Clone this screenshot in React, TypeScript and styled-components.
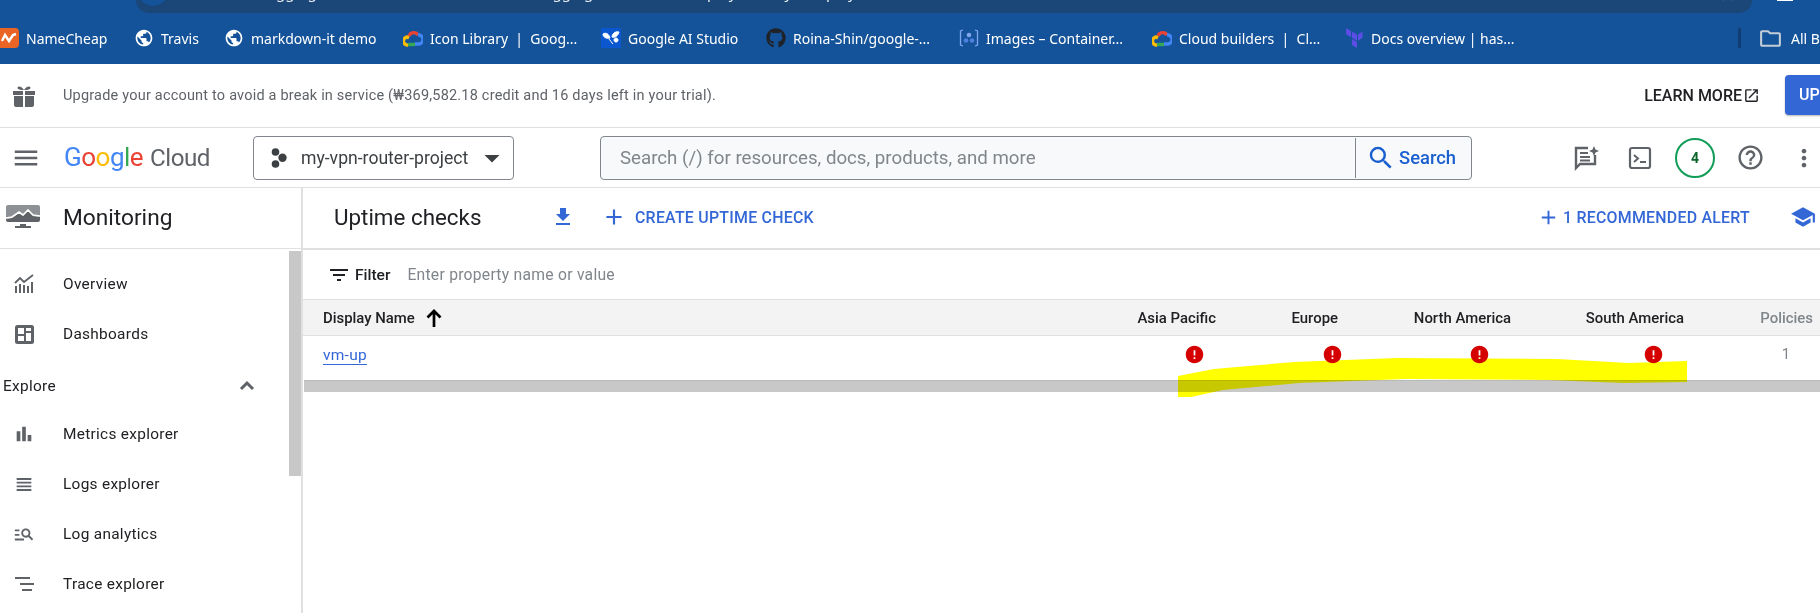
import React from "react";
import styled, { createGlobalStyle } from "styled-components";
import {
  MdMenu, MdArrowDropDown, MdSearch, MdFileDownload, MdAdd, MdFilterList, MdError,
  MdHelpOutline, MdMoreVert, MdOpenInNew, MdSchool, MdBarChart, MdViewHeadline,
  MdManageSearch, MdStarBorder, MdPublic, MdOutlineFolder,
} from "react-icons/md";
import { FaGithub } from "react-icons/fa";

const Global = createGlobalStyle`
  html, body { margin: 0; padding: 0; width: 1820px; height: 613px; overflow: hidden; background: #fff; }
  body { font-family: Roboto, "Liberation Sans", sans-serif; }
  * { box-sizing: border-box; }
`;

const Page = styled.div`
  position: relative;
  width: 1820px;
  height: 613px;
  overflow: hidden;
  display: flex;
  flex-direction: column;
`;

/* browser chrome */
const Chrome = styled.div`
  height: 64px;
  flex: none;
  background: #14539a;
  display: flex;
  flex-direction: column;
  overflow: hidden;
`;
const TopStrip = styled.div`
  height: 13px;
  flex: none;
  display: flex;
  padding-left: 136px;
`;
const AddressPill = styled.div`
  width: 1616px;
  height: 13px;
  background: #1b4678;
  border-radius: 0 0 14px 14px;
  overflow: hidden;
  display: flex;
  font: 15px "Noto Sans", sans-serif;
  color: #fff;
`;
const PillDot = styled.span`
  width: 30px;
  height: 30px;
  margin: -24px 0 0 2px;
  background: #14539a;
  border-radius: 50%;
  flex: none;
`;
const PillText = styled.span`
  margin: -18px 0 0 70px;
  line-height: 20px;
  white-space: pre;
  word-spacing: 9px;
  color: #e8edf3;
`;
const PillStar = styled.span`
  margin: -17px 14px 0 auto;
  color: #cfd8e3;
  font-size: 20px;
  display: flex;
`;
const ProfileTick = styled.span`
  width: 16px;
  height: 1px;
  margin-left: 25px;
  background: #fff;
`;
const Bookmarks = styled.div`
  flex: 1;
  display: flex;
  align-items: center;
  margin-top: -1px;
  color: #fff;
  font: 14px "Noto Sans", "Open Sans", sans-serif;
  white-space: nowrap;
`;
const Bookmark = styled.div<{ $x: number }>`
  width: ${(p) => p.$x}px;
  flex: none;
  display: flex;
  align-items: center;
  gap: 7px;
  white-space: pre;
  svg { flex: none; display: block; }
`;
const BookmarkDivider = styled.span`
  width: 3px;
  height: 20px;
  flex: none;
  border-radius: 1px;
  background: #0f3d73;
  margin-right: 19px;
`;
const FolderGlyph = styled.span`
  color: #c4ccd6;
  font-size: 25px;
  display: flex;
  margin-right: 8px;
  margin-left: -2px;
`;

/* trial banner */
const Banner = styled.div`
  height: 64px;
  flex: none;
  display: flex;
  align-items: center;
  border-bottom: 1px solid #e0e0e0;
  padding-left: 12px;
  overflow: hidden;
`;
const BannerText = styled.div`
  margin-left: 27px;
  font-size: 14.5px;
  color: #5f6368;
  letter-spacing: 0.2px;
  white-space: nowrap;
`;
const LearnMore = styled.div`
  margin-left: auto;
  display: flex;
  align-items: center;
  color: #202124;
  font-size: 16px;
  font-weight: 500;
  svg { margin-left: 1px; font-size: 17px; }
  margin-bottom: 1px;
`;
const UpgradeButton = styled.div`
  width: 60px;
  height: 40px;
  margin: -2px -25px 0 25px;
  background: #3367d6;
  border-radius: 4px;
  color: #fff;
  font-size: 16px;
  font-weight: 500;
  padding: 10px 0 0 14px;
  box-shadow: 0 1px 2px rgba(0,0,0,.3);
  flex: none;
  white-space: nowrap;
  overflow: hidden;
`;

/* cloud header */
const Header = styled.div`
  height: 60px;
  flex: none;
  display: flex;
  align-items: center;
  border-bottom: 1px solid #e0e0e0;
`;
const Hamburger = styled.div`
  width: 65px;
  flex: none;
  padding-left: 11px;
  color: #5f6368;
  font-size: 30px;
  display: flex;
`;
const Logo = styled.div`
  width: 188px;
  flex: none;
  display: flex;
  align-items: baseline;
  font-size: 26px;
  letter-spacing: -0.5px;
  margin-top: -2px;
  white-space: pre;
  margin-left: -1px;
`;
const LogoLetter = styled.span<{ $c: string }>`
  color: ${(p) => p.$c};
`;
const LogoWord = styled.span`
  color: #5f6368;
  font-size: 24.2px;
  margin-left: 7px;
`;
const ProjectPicker = styled.div`
  width: 261px;
  height: 44px;
  flex: none;
  margin-left: 1px;
  border: 1px solid #80868b;
  border-radius: 4px;
  display: flex;
  align-items: center;
  padding-left: 17px;
  gap: 14px;
  font-size: 17.6px;
  color: #3c4043;
  svg { flex: none; }
`;
const DropGlyph = styled.span`
  font-size: 36px;
  color: #3c4043;
  display: flex;
  margin-left: -8px;
`;
const SearchBox = styled.div`
  margin-left: 86px;
  width: 872px;
  height: 44px;
  flex: none;
  border: 1px solid #80868b;
  border-radius: 4px;
  background: #f8f9fa;
  display: flex;
  align-items: center;
`;
const SearchPlaceholder = styled.div`
  flex: 1;
  padding-left: 19px;
  font-size: 18.7px;
  color: #80868b;
  white-space: nowrap;
`;
const SearchAction = styled.div`
  width: 116px;
  height: 40px;
  flex: none;
  border-left: 1px solid #80868b;
  display: flex;
  align-items: center;
  padding-left: 10px;
  gap: 3px;
  color: #1a5fd0;
  font-size: 18.4px;
  font-weight: 500;
  svg { font-size: 30px; flex: none; }
`;
const HeaderTools = styled.div`
  flex: 1;
  display: flex;
  align-items: center;
  color: #5f6368;
  padding-left: 99px;
`;
const ToolSlot = styled.div<{ $w: number }>`
  width: ${(p) => p.$w}px;
  flex: none;
  display: flex;
  justify-content: center;
`;
const NotificationRing = styled.div`
  width: 40px;
  height: 40px;
  flex: none;
  border: 2px solid #0f9d58;
  border-radius: 50%;
  display: flex;
  align-items: center;
  justify-content: center;
  font-size: 14px;
  font-weight: 700;
  color: #0d652d;
`;

/* body */
const Body = styled.div`
  flex: 1;
  min-height: 0;
  display: flex;
`;
const Sidebar = styled.aside`
  width: 303px;
  flex: none;
  border-right: 2px solid #e0e0e0;
  display: flex;
  flex-direction: column;
`;
const SideHead = styled.div`
  height: 61px;
  flex: none;
  border-bottom: 1px solid #e0e0e0;
  display: flex;
  align-items: center;
  padding: 0 0 2px 6px;
  font-size: 22.7px;
  color: #202124;
  gap: 23px;
`;
const SideBody = styled.div`
  flex: 1;
  min-height: 0;
  display: flex;
  overflow: hidden;
`;
const NavList = styled.nav`
  flex: 1;
  min-width: 0;
  padding-top: 10px;
  display: flex;
  flex-direction: column;
`;
const NavItem = styled.div`
  height: 50px;
  flex: none;
  display: flex;
  align-items: center;
  padding-left: 13px;
  font-size: 15.4px;
  letter-spacing: .3px;
  color: #202124;
`;
const NavIcon = styled.span<{ $size?: number }>`
  width: 22px;
  flex: none;
  display: flex;
  justify-content: center;
  color: #5f6368;
  font-size: ${(p) => p.$size ?? 22}px;
`;
const NavLabel = styled.span`
  margin-left: 28px;
`;
const NavGroup = styled.div`
  height: 50px;
  flex: none;
  display: flex;
  align-items: center;
  justify-content: space-between;
  padding: 3px 33px 0 3px;
  font-size: 15.4px;
  letter-spacing: .3px;
  color: #202124;
`;
const ScrollThumb = styled.div`
  width: 12px;
  height: 225px;
  margin-top: 2px;
  background: #c8c8c8;
  flex: none;
`;

const Main = styled.main`
  flex: 1;
  min-width: 0;
  display: flex;
  flex-direction: column;
`;
const MainHead = styled.div`
  height: 62px;
  flex: none;
  border-bottom: 2px solid #e0e0e0;
  display: flex;
  align-items: center;
  padding: 0 0 2px 31px;
  overflow: hidden;
`;
const PageTitle = styled.h1`
  margin: 0;
  width: 217px;
  flex: none;
  font-size: 22.4px;
  font-weight: 400;
  color: #202124;
  white-space: nowrap;
`;
const BlueIcon = styled.span`
  color: #3367d6;
  display: flex;
  font-size: 24px;
  flex: none;
`;
const ActionButton = styled.div<{ $ml: string; $icon: number; $gap: number }>`
  margin-left: ${(p) => p.$ml};
  display: flex;
  align-items: center;
  gap: ${(p) => p.$gap}px;
  color: #3367d6;
  font-size: 15.9px;
  font-weight: 500;
  letter-spacing: .25px;
  white-space: nowrap;
  flex: none;
  svg { font-size: ${(p) => p.$icon}px; flex: none; }
`;
const ClippedAction = styled(ActionButton)`
  width: 30px;
  overflow: hidden;
`;
const FilterBar = styled.div`
  height: 50px;
  flex: none;
  display: flex;
  align-items: center;
  padding-left: 24px;
  border-bottom: 1px solid #e0e0e0;
`;
const FilterLabel = styled.span`
  margin-left: 4px;
  font-size: 15.5px;
  font-weight: 500;
  color: #202124;
`;
const FilterHint = styled.span`
  margin-left: 17px;
  font-size: 15.7px;
  letter-spacing: .25px;
  color: #80868b;
`;
const GridRow = styled.div<{ $head?: boolean }>`
  flex: none;
  display: grid;
  grid-template-columns: 741px 152px 122px 173px 173px 129px;
  align-items: center;
  height: ${(p) => (p.$head ? 36 : 44)}px;
  padding-left: 20px;
  background: ${(p) => (p.$head ? "#f3f3f3" : "#fff")};
  border-bottom: ${(p) => (p.$head ? "1px solid #e0e0e0" : "none")};
  font-size: 14.9px;
  white-space: nowrap;
`;
const NameHead = styled.div`
  display: flex;
  align-items: center;
  gap: 7px;
  font-weight: 500;
  color: #202124;
`;
const ColHead = styled.div<{ $muted?: boolean }>`
  text-align: right;
  font-weight: 500;
  color: ${(p) => (p.$muted ? "#80868b" : "#202124")};
`;
const VmLink = styled.a`
  justify-self: start;
  color: #3367d6;
  font-size: 15.5px;
  letter-spacing: .25px;
  border-bottom: 1px solid #3367d6;
  line-height: 18px;
  margin-top: -6px;
`;
const StatusCell = styled.div<{ $inset: number }>`
  display: flex;
  justify-content: flex-end;
  margin-top: -8px;
  margin-right: ${(p) => p.$inset}px;
  color: #d50000;
  font-size: 21px;
`;
const CountCell = styled.div`
  text-align: right;
  color: #80868b;
  padding-right: 23px;
  margin-top: -8px;
`;
const HScroll = styled.div`
  height: 12px;
  flex: none;
  margin-left: 1px;
  background: #c8c8c8;
  border-top: 1px solid #b9b9b9;
`;
const Highlighter = styled.svg`
  position: absolute;
  left: 1178px;
  top: 358px;
  mix-blend-mode: multiply;
  pointer-events: none;
`;

const NamecheapIcon = () => (
  <svg width="19" height="20" viewBox="0 0 19 20">
    <rect x="-4" width="23" height="20" rx="4" fill="#ea6426" />
    <path d="M2 13l3-6 4 6 4-6 3-1" fill="none" stroke="#fff" strokeWidth="2.4" />
  </svg>
);
const CloudIcon = () => (
  <svg width="20" height="17" viewBox="0 0 20 17">
    <path d="M6 6a5 5 0 0 1 9-1" fill="none" stroke="#ea4335" strokeWidth="3.4" />
    <path d="M15 5a4.5 4.5 0 0 1 1 9h-4" fill="none" stroke="#4285f4" strokeWidth="3.4" />
    <path d="M12 14.500H5" fill="none" stroke="#34a853" strokeWidth="3.4" />
    <path d="M5 15a4 4 0 0 1-1-8l2 1" fill="none" stroke="#fbbc04" strokeWidth="3.4" />
  </svg>
);
const StudioIcon = () => (
  <svg width="20" height="20" viewBox="0 0 20 20">
    <rect width="20" height="20" fill="#0b57d0" rx="1" />
    <path d="M2 6c3-2 6 0 7 4-4 1-7-1-7-4zM18 4c-4-1-7 2-7 5 3 1 6-1 7-5zM8 11l4 5M13 12a2 2 0 1 1 0 .1" fill="#fff" stroke="#fff" strokeWidth="1" />
  </svg>
);
const ImagesIcon = () => (
  <svg width="20" height="18" viewBox="0 0 20 18" fill="none">
    <path d="M4 1L1.500 2v14L4 17M16 1l2.500 1v14L16 17" stroke="#7fa6ee" strokeWidth="1.300" />
    <circle cx="10" cy="6" r="2.300" fill="#7fa6ee" />
    <circle cx="7" cy="11.500" r="2.300" fill="#4f80e0" />
    <circle cx="13" cy="11.500" r="2.300" fill="#4f80e0" />
  </svg>
);
const TerraformIcon = () => (
  <svg width="19" height="20" viewBox="0 0 19 20" fill="#5c4ee5">
    <path d="M1 0l5 3v6.300L1 6.300zM7 3.500L12 6.500v6.300L7 9.800zM13 6.500l4.500-3v6.300L13 12.800zM7 11l5 3v6l-5-3z" />
  </svg>
);
const GiftIcon = () => (
  <svg width="24" height="24" viewBox="0 0 24 24" fill="#5f6368">
    <path d="M1 7h10v4H1zM13 7h10v4H13zM2 12h9v11H4a2 2 0 0 1-2-2zM13 12h9v9a2 2 0 0 1-2 2h-7z" />
    <path d="M6 5c-2-3 3-4 6 1 3-5 8-4 6-1l-3 1H9z" />
  </svg>
);
const ProjectDots = () => (
  <svg width="16" height="20" viewBox="0 0 16 20" fill="#3c4043">
    <circle cx="4.500" cy="4" r="3.800" />
    <circle cx="11.500" cy="9.800" r="4.200" />
    <circle cx="4.500" cy="16" r="3.800" />
  </svg>
);
const AssistIcon = () => (
  <svg width="26" height="26" viewBox="0 0 26 26" fill="none">
    <path d="M15 3H3v20l4-4h15v-9" stroke="#5f6368" strokeWidth="2.400" />
    <path d="M7 8h8M7 12h10M7 15.500h10" stroke="#5f6368" strokeWidth="2" />
    <path d="M21 1l1.500 3.500L26 6l-3.500 1.500L21 11l-1.500-3.500L16 6l3.500-1.500z" fill="#5f6368" />
  </svg>
);
const TerminalIcon = () => (
  <svg width="24" height="24" viewBox="0 0 24 24" fill="none" stroke="#5f6368">
    <rect x="2" y="2" width="20" height="20" rx="2" strokeWidth="2.200" />
    <path d="M6 9l4 3.500L6 16" strokeWidth="2" />
    <path d="M12 16h6" strokeWidth="2" />
  </svg>
);
const MonitoringIcon = () => (
  <svg width="34" height="24" viewBox="0 0 34 24">
    <path d="M0 2a2 2 0 0 1 2-2h30a2 2 0 0 1 2 2v10l-7-1-5-5-5 5-4-3-7 5-6 1z" fill="#8d9196" />
    <path d="M0 14l6-1 7-5 4 3 5-5 5 5 7 1v3a2 2 0 0 1-2 2H2a2 2 0 0 1-2-2z" fill="#5f6368" />
    <path d="M0 13l6-1 7-5 4 3 5-5 5 5 7 1" fill="none" stroke="#fff" strokeWidth="1.600" />
    <path d="M14 19h6v2h5v2H9v-2h5z" fill="#5f6368" />
  </svg>
);
const OverviewIcon = () => (
  <svg width="20" height="20" viewBox="0 0 20 20" fill="#5f6368">
    <path d="M1 12h2v7H1zM5 10h2v9H5zM9 11h2v8H9zM13 12h2v7h-2zM17 8h2v11h-2z" />
    <path d="M1 9l5-5 4 4 9-7" fill="none" stroke="#5f6368" strokeWidth="1.800" />
  </svg>
);
const DashboardIcon = () => (
  <svg width="19" height="19" viewBox="0 0 19 19">
    <rect width="19" height="19" rx="2.500" fill="#5f6368" />
    <path d="M3 3h6v6H3zM11 3h5v3h-5zM3 11h6v5H3zM11 8h5v8h-5z" fill="#fff" />
  </svg>
);
const TraceIcon = () => (
  <svg width="20" height="18" viewBox="0 0 20 18" fill="#5f6368">
    <path d="M1 2h15v2H1zM6 8h14v2H6zM8 14h10v2H8z" />
  </svg>
);
const SortArrow = () => (
  <svg width="24" height="24" viewBox="0 0 24 24" fill="none" stroke="#000" strokeWidth="2.700">
    <path d="M12 21V5M5.500 11.500L12 5l6.500 6.500" />
  </svg>
);
const CollapseChevron = () => (
  <svg width="18" height="18" viewBox="0 0 18 18" fill="none" stroke="#5f6368" strokeWidth="3">
    <path d="M3 12l6-6 6 6" />
  </svg>
);

const logo: [string, string][] = [
  ["G", "#4285f4"], ["o", "#ea4335"], ["o", "#fbbc04"], ["g", "#4285f4"], ["l", "#34a853"], ["e", "#ea4335"],
];

export default function App() {
  return (
    <Page>
      <Global />
      <Chrome>
        <TopStrip>
          <AddressPill>
            <PillDot />
            <PillText>{"Debugging is hard, then ask more, logging, a mode, deploy, many, deploy"}</PillText>
            <PillStar><MdStarBorder /></PillStar>
          </AddressPill>
          <ProfileTick />
        </TopStrip>
        <Bookmarks>
          <Bookmark $x={134}><NamecheapIcon /><span>NameCheap</span></Bookmark>
          <Bookmark $x={90}><MdPublic size={20} /><span>Travis</span></Bookmark>
          <Bookmark $x={179}><MdPublic size={20} /><span>markdown-it demo</span></Bookmark>
          <Bookmark $x={198}><CloudIcon /><span>{"Icon Library  |  Goog..."}</span></Bookmark>
          <Bookmark $x={165}><StudioIcon /><span>Google AI Studio</span></Bookmark>
          <Bookmark $x={193}><FaGithub size={20} color="#1f2328" /><span>Roina-Shin/google-...</span></Bookmark>
          <Bookmark $x={193}><ImagesIcon /><span>Images – Container...</span></Bookmark>
          <Bookmark $x={193}><CloudIcon /><span>{"Cloud builders  |  Cl..."}</span></Bookmark>
          <Bookmark $x={393}><TerraformIcon /><span>Docs overview | has...</span></Bookmark>
          <BookmarkDivider />
          <FolderGlyph><MdOutlineFolder /></FolderGlyph>
          <span>All Bookmarks</span>
        </Bookmarks>
      </Chrome>

      <Banner>
        <GiftIcon />
        <BannerText>Upgrade your account to avoid a break in service (₩369,582.18 credit and 16 days left in your trial).</BannerText>
        <LearnMore>LEARN MORE<MdOpenInNew /></LearnMore>
        <UpgradeButton>UPGRADE</UpgradeButton>
      </Banner>

      <Header>
        <Hamburger><MdMenu /></Hamburger>
        <Logo>
          {logo.map(([l, c], i) => <LogoLetter key={i} $c={c}>{l}</LogoLetter>)}
          <LogoWord>Cloud</LogoWord>
        </Logo>
        <ProjectPicker>
          <ProjectDots />
          <span>my-vpn-router-project</span>
          <DropGlyph><MdArrowDropDown /></DropGlyph>
        </ProjectPicker>
        <SearchBox>
          <SearchPlaceholder>Search (/) for resources, docs, products, and more</SearchPlaceholder>
          <SearchAction><MdSearch /><span>Search</span></SearchAction>
        </SearchBox>
        <HeaderTools>
          <ToolSlot $w={30}><AssistIcon /></ToolSlot>
          <ToolSlot $w={78}><TerminalIcon /></ToolSlot>
          <ToolSlot $w={32}><NotificationRing>4</NotificationRing></ToolSlot>
          <ToolSlot $w={78}><MdHelpOutline size={29} /></ToolSlot>
          <ToolSlot $w={30}><MdMoreVert size={28} /></ToolSlot>
        </HeaderTools>
      </Header>

      <Body>
        <Sidebar>
          <SideHead><MonitoringIcon /><span>Monitoring</span></SideHead>
          <SideBody>
            <NavList>
              <NavItem><NavIcon><OverviewIcon /></NavIcon><NavLabel>Overview</NavLabel></NavItem>
              <NavItem><NavIcon><DashboardIcon /></NavIcon><NavLabel>Dashboards</NavLabel></NavItem>
              <NavGroup><span>Explore</span><CollapseChevron /></NavGroup>
              <NavItem><NavIcon $size={26}><MdBarChart /></NavIcon><NavLabel>Metrics explorer</NavLabel></NavItem>
              <NavItem><NavIcon $size={27}><MdViewHeadline /></NavIcon><NavLabel>Logs explorer</NavLabel></NavItem>
              <NavItem><NavIcon $size={24}><MdManageSearch /></NavIcon><NavLabel>Log analytics</NavLabel></NavItem>
              <NavItem><NavIcon><TraceIcon /></NavIcon><NavLabel>Trace explorer</NavLabel></NavItem>
            </NavList>
            <ScrollThumb />
          </SideBody>
        </Sidebar>
        <Main>
          <MainHead>
            <PageTitle>Uptime checks</PageTitle>
            <BlueIcon><MdFileDownload /></BlueIcon>
            <ActionButton $ml="26px" $icon={26} $gap={8}><MdAdd /><span>CREATE UPTIME CHECK</span></ActionButton>
            <ActionButton $ml="auto" $icon={23} $gap={3}><MdAdd /><span>1 RECOMMENDED ALERT</span></ActionButton>
            <ClippedAction $ml="40px" $icon={26} $gap={3}><MdSchool /><span>LEARN</span></ClippedAction>
          </MainHead>
          <FilterBar>
            <MdFilterList size={24} color="#202124" />
            <FilterLabel>Filter</FilterLabel>
            <FilterHint>Enter property name or value</FilterHint>
          </FilterBar>
          <GridRow $head>
            <NameHead>Display Name <SortArrow /></NameHead>
            <ColHead>Asia Pacific</ColHead>
            <ColHead>Europe</ColHead>
            <ColHead>North America</ColHead>
            <ColHead>South America</ColHead>
            <ColHead $muted>Policies</ColHead>
          </GridRow>
          <GridRow>
            <VmLink>vm-up</VmLink>
            <StatusCell $inset={11}><MdError /></StatusCell>
            <StatusCell $inset={-4.5}><MdError /></StatusCell>
            <StatusCell $inset={21.5}><MdError /></StatusCell>
            <StatusCell $inset={20.5}><MdError /></StatusCell>
            <CountCell>1</CountCell>
          </GridRow>
          <HScroll />
        </Main>
      </Body>

      <Highlighter width="509" height="39" viewBox="1178 358 509 39">
        <polygon
          fill="#ffff00"
          points="1178,376 1214,369 1294,362 1397,358 1557,359 1629,363 1687,361 1687,382 1624,383 1549,380 1406,379 1299,383 1223,390 1191,397 1178,397"
        />
      </Highlighter>
    </Page>
  );
}
